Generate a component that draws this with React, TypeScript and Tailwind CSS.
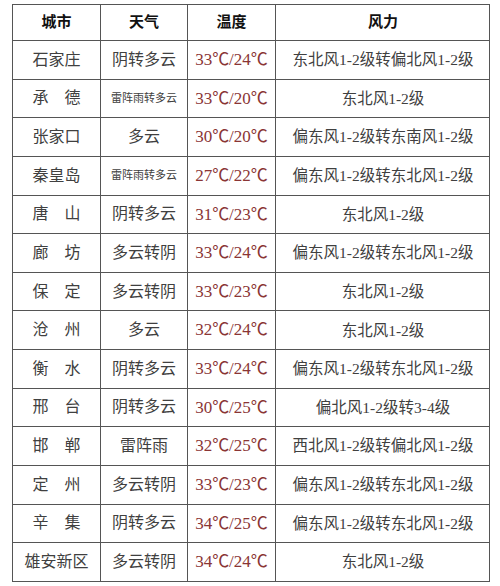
const rows: [string, string, string, string][] = [
  ["石家庄", "阴转多云", "33℃/24℃", "东北风1-2级转偏北风1-2级"],
  ["承　德", "雷阵雨转多云", "33℃/20℃", "东北风1-2级"],
  ["张家口", "多云", "30℃/20℃", "偏东风1-2级转东南风1-2级"],
  ["秦皇岛", "雷阵雨转多云", "27℃/22℃", "偏东风1-2级转东北风1-2级"],
  ["唐　山", "阴转多云", "31℃/23℃", "东北风1-2级"],
  ["廊　坊", "多云转阴", "33℃/24℃", "偏东风1-2级转东北风1-2级"],
  ["保　定", "多云转阴", "33℃/23℃", "东北风1-2级"],
  ["沧　州", "多云", "32℃/24℃", "东北风1-2级"],
  ["衡　水", "阴转多云", "33℃/24℃", "偏东风1-2级转东北风1-2级"],
  ["邢　台", "阴转多云", "30℃/25℃", "偏北风1-2级转3-4级"],
  ["邯　郸", "雷阵雨", "32℃/25℃", "西北风1-2级转偏北风1-2级"],
  ["定　州", "多云转阴", "33℃/23℃", "偏东风1-2级转东北风1-2级"],
  ["辛　集", "阴转多云", "34℃/25℃", "偏东风1-2级转东北风1-2级"],
  ["雄安新区", "多云转阴", "34℃/24℃", "东北风1-2级"],
];

const font = { fontFamily: '"Liberation Serif", "Noto Sans CJK SC", serif' };

const App = () => {
  return (
    <div className="w-[500px] h-[586px] bg-white pt-[4px] pl-[12px]" style={font}>
      <div className="w-[478px] border-r border-b border-[#555] grid grid-cols-[88px_87px_88px_215px] grid-rows-[36px_repeat(14,38.64px)]">
        {/* Header */}
        {["城市", "天气", "温度", "风力"].map((h) => (
          <div
            key={h}
            className="border-l border-t border-[#555] flex items-center justify-center text-[15px] font-bold text-[#111]"
          >
            {h}
          </div>
        ))}

        {rows.map(([city, weather, temp, wind]) => (
          <div key={city} className="contents">
            <div className="border-l border-t border-[#555] flex items-center justify-center text-[16px] text-[#404040]">
              {city}
            </div>
            <div
              className={`border-l border-t border-[#555] flex items-center justify-center text-[#404040] ${
                weather.length > 5 ? "text-[11px]" : "text-[16px]"
              }`}
            >
              {weather}
            </div>
            <div className="border-l border-t border-[#555] flex items-center justify-center text-[17px] text-[#8a3535]">
              {temp}
            </div>
            <div className="border-l border-t border-[#555] flex items-center justify-center text-[15.5px] text-[#404040]">
              {wind}
            </div>
          </div>
        ))}
      </div>
    </div>
  );
};

export default App;
